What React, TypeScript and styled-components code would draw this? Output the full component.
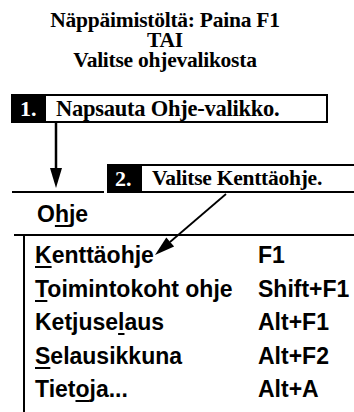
import React from 'react';
import styled, { createGlobalStyle } from 'styled-components';

const GlobalStyle = createGlobalStyle`
  html, body {
    margin: 0;
    padding: 0;
    background: #fff;
    overflow: hidden;
  }
`;

interface MenuItem {
  label: React.ReactNode;
  shortcut: string;
}

const items: MenuItem[] = [
  { label: <><u>K</u>enttäohje</>, shortcut: 'F1' },
  { label: <><u>T</u>oimintokoht ohje</>, shortcut: 'Shift+F1' },
  { label: <>Ketjuse<u>l</u>aus</>, shortcut: 'Alt+F1' },
  { label: <><u>S</u>elausikkuna</>, shortcut: 'Alt+F2' },
  { label: <>Tiet<u>o</u>ja...</>, shortcut: 'Alt+A' },
];

export default function App() {
  return (
    <Page>
      <GlobalStyle />
      <Title>
        <div>Näppäimistöltä: Paina F1</div>
        <div>TAI</div>
        <div>Valitse ohjevalikosta</div>
      </Title>

      <Callout $left={11} $width={317}>
        <StepNum $pad={7}>1.</StepNum>
        <StepText $size={22.5}>Napsauta Ohje-valikko.</StepText>
      </Callout>

      <Diagram>
        <Connector>
          <Callout $left={0} $width={260} $raised>
            <StepNum $pad={6}>2.</StepNum>
            <StepText $size={21.5}>Valitse Kenttäohje.</StepText>
          </Callout>
        </Connector>

        <MenuBar>
          O<u>h</u>je
        </MenuBar>

        <Menu>
          <MenuList>
            {items.map((item, i) => (
              <React.Fragment key={i}>
                <span>{item.label}</span>
                <span>{item.shortcut}</span>
              </React.Fragment>
            ))}
          </MenuList>
        </Menu>

        <Arrows width="354" height="289" viewBox="0 0 354 289">
          {/* step 1 -> menubar */}
          <line x1="56" y1="0" x2="56" y2="48" stroke="#000" strokeWidth="2.5" />
          <polygon points="50,45 62,45 56,65" fill="#000" />
          {/* step 2 -> Kenttäohje */}
          <line x1="226" y1="71" x2="170" y2="119" stroke="#000" strokeWidth="1.8" />
          <polygon points="174.1,123.5 166.3,114.5 155,132" fill="#000" />
        </Arrows>
      </Diagram>
    </Page>
  );
}

const Page = styled.div`
  width: 354px;
  height: 412px;
  overflow: hidden;
  color: #000;
`;

const Title = styled.div`
  padding: 10px 24px 0 0;
  font-family: 'Liberation Serif', 'Times New Roman', serif;
  font-weight: 700;
  font-size: 21.5px;
  letter-spacing: -0.25px;
  line-height: 20px;
  text-align: center;
`;

const Callout = styled.div<{ $left: number; $width: number; $raised?: boolean }>`
  display: flex;
  box-sizing: border-box;
  height: 29px;
  width: ${(p) => p.$width}px;
  margin-left: ${(p) => p.$left}px;
  margin-top: ${(p) => (p.$raised ? 0 : 24)}px;
  border: 2px solid #000;
  background: #fff;
  font-family: 'Liberation Serif', 'Times New Roman', serif;
  font-weight: 700;
  ${(p) =>
    p.$raised &&
    `
    position: relative;
    z-index: 1;
    flex-shrink: 0;
    margin-bottom: -2px;
    box-shadow: 0 0 0 3px #fff;
  `}
`;

const StepNum = styled.div<{ $pad: number }>`
  width: 33px;
  flex-shrink: 0;
  box-sizing: border-box;
  padding-left: ${(p) => p.$pad}px;
  background: #000;
  color: #fff;
  font-size: 22px;
  line-height: 25px;
`;

const StepText = styled.div<{ $size: number }>`
  padding-left: 10px;
  font-size: ${(p) => p.$size}px;
  letter-spacing: -0.25px;
  line-height: 25px;
  white-space: nowrap;
`;

const Diagram = styled.div`
  position: relative;
`;

const Connector = styled.div`
  display: flex;
  align-items: flex-end;
  height: 68px;
  padding-left: 107px;
`;

const MenuBar = styled.div`
  margin-left: 12px;
  padding: 4px 0 3px 25px;
  border-top: 2px solid #000;
  font-family: 'Liberation Sans', Arial, sans-serif;
  font-weight: 700;
  font-size: 23px;
  line-height: 34px;

  u {
    text-decoration-thickness: 2px;
    text-underline-offset: 3px;
  }
`;

const Menu = styled.div`
  margin-left: 14px;
  border-top: 2px solid #000;
`;

const MenuList = styled.div`
  display: grid;
  grid-template-columns: 223px auto;
  margin-left: 9px;
  padding: 3px 0 40px 10px;
  border-left: 2px solid #000;
  font-family: 'Liberation Sans', Arial, sans-serif;
  font-weight: 700;
  font-size: 23px;
  line-height: 33.5px;
  white-space: nowrap;

  u {
    text-decoration-thickness: 2px;
    text-underline-offset: 3px;
  }
`;

const Arrows = styled.svg`
  position: absolute;
  left: 0;
  top: 0;
  z-index: 2;
  pointer-events: none;
`;
